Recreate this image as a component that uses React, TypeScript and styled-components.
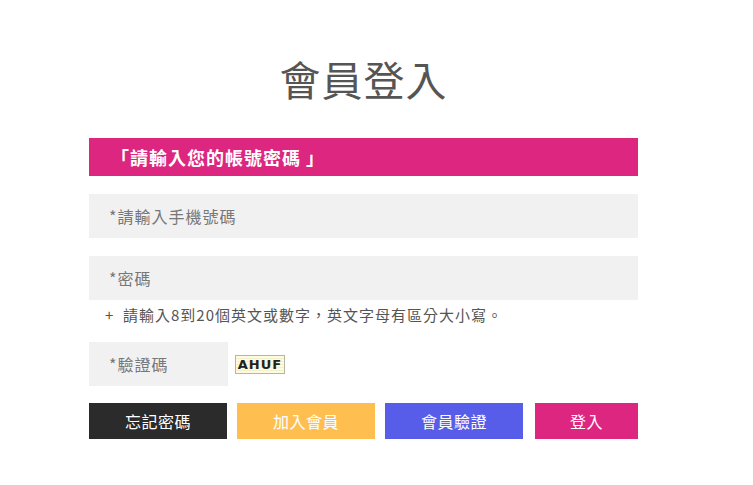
import React from 'react';
import styled, { createGlobalStyle } from 'styled-components';

const GlobalStyle = createGlobalStyle`
  body {
    margin: 0;
    background: #fff;
    font-family: 'Noto Sans CJK TC', 'Noto Sans', sans-serif;
  }
`;

const Page = styled.div`
  width: 549px;
  margin-left: 89px;
  padding-top: 52px;
`;

const Title = styled.h1`
  margin: 0 0 34px;
  text-align: center;
  font-size: 41px;
  font-weight: 400;
  line-height: 52px;
  letter-spacing: 1px;
  color: #555;
`;

const Banner = styled.div`
  height: 38px;
  background: #dc2680;
  color: #fff;
  font-size: 18px;
  font-weight: 700;
  line-height: 38px;
  letter-spacing: 1px;
  padding-left: 22px;
  margin-bottom: 18px;
`;

const Form = styled.div`
  display: flex;
  flex-direction: column;
  gap: 18px;
`;

const Field = styled.input<{ $width?: number }>`
  box-sizing: border-box;
  width: ${(p) => (p.$width ? `${p.$width}px` : '100%')};
  height: 44px;
  border: 0;
  outline: none;
  background: #f1f1f1;
  padding: 0 20px;
  font-family: inherit;
  font-size: 16px;
  letter-spacing: 1px;
  color: #555;
  &::placeholder {
    color: #777;
  }
`;

const PasswordGroup = styled.div`
  display: flex;
  flex-direction: column;
`;

const Hint = styled.p`
  margin: 0;
  padding: 6px 0 0 16px;
  font-size: 15px;
  line-height: 18px;
  letter-spacing: 1px;
  color: #555;
`;

const CaptchaRow = styled.div`
  display: flex;
  align-items: center;
  gap: 7px;
`;

const Captcha = styled.div`
  width: 48px;
  height: 17px;
  border: 1px solid #b8b5a0;
  background: repeating-linear-gradient(0deg, #fffbe0 0 2px, #f5f0cc 2px 3px);
  font-family: 'DejaVu Sans', sans-serif;
  font-size: 13px;
  font-weight: 600;
  line-height: 17px;
  text-align: center;
  color: #222;
  letter-spacing: 1px;
`;

const Actions = styled.div`
  display: flex;
  gap: 10px;
  margin-top: -1px;
`;

const Button = styled.button<{ $bg: string; $width: number }>`
  width: ${(p) => p.$width}px;
  height: 36px;
  border: 0;
  background: ${(p) => p.$bg};
  color: #fff;
  font-family: inherit;
  font-size: 16px;
  letter-spacing: 0.5px;
  cursor: pointer;
`;

const LoginButton = styled(Button)`
  margin-left: 2px;
`;

export default function App() {
  return (
    <>
      <GlobalStyle />
      <Page>
        <Title>會員登入</Title>
        <Banner>「請輸入您的帳號密碼 」</Banner>
        <Form>
          <Field placeholder="*請輸入手機號碼" />
          <PasswordGroup>
            <Field type="password" placeholder="*密碼" />
            <Hint>+&nbsp; 請輸入8到20個英文或數字，英文字母有區分大小寫。</Hint>
          </PasswordGroup>
          <CaptchaRow>
            <Field $width={139} placeholder="*驗證碼" />
            <Captcha>AHUF</Captcha>
          </CaptchaRow>
          <Actions>
            <Button $bg="#2b2b2b" $width={138}>忘記密碼</Button>
            <Button $bg="#ffbf50" $width={138}>加入會員</Button>
            <Button $bg="#585de9" $width={138}>會員驗證</Button>
            <LoginButton $bg="#dc2680" $width={103}>登入</LoginButton>
          </Actions>
        </Form>
      </Page>
    </>
  );
}
